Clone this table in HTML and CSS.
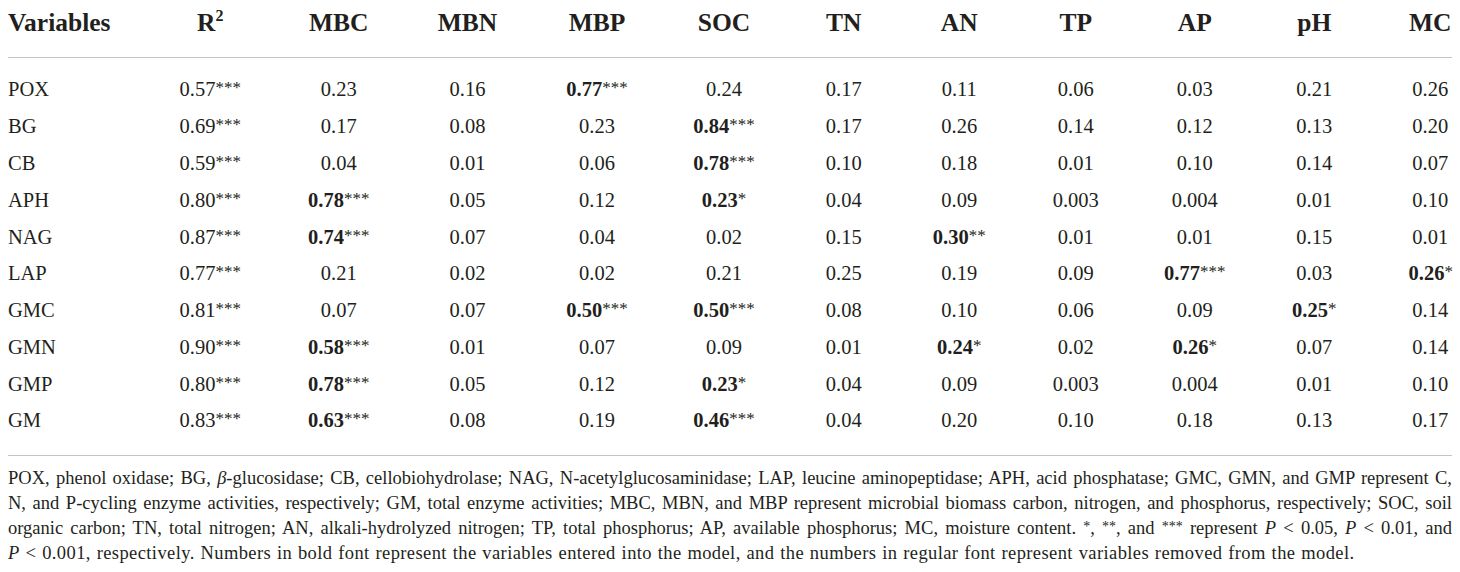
FILE: index.html
```html
<!DOCTYPE html>
<html>
<head>
<meta charset="utf-8">
<link rel="stylesheet" href="styles.css">
</head>
<body>
<div class="wrap">
<table class="tbl">
  <colgroup>
    <col class="c1"><col class="c2"><col class="c3"><col class="c4"><col class="c5"><col class="c6">
    <col class="c7"><col class="c8"><col class="c9"><col class="c10"><col class="c11"><col class="c12">
  </colgroup>
  <thead>
    <tr>
      <th class="first">Variables</th><th>R<sup class="sq">2</sup></th><th>MBC</th><th>MBN</th><th>MBP</th><th>SOC</th><th>TN</th><th>AN</th><th>TP</th><th>AP</th><th>pH</th><th class="last">MC</th>
    </tr>
  </thead>
  <tbody>
    <tr class="top"><td class="first">POX</td><td>0.57<span class="st">***</span></td><td>0.23</td><td>0.16</td><td><b>0.77</b><span class="st">***</span></td><td>0.24</td><td>0.17</td><td>0.11</td><td>0.06</td><td>0.03</td><td>0.21</td><td class="last">0.26</td></tr>
    <tr><td class="first">BG</td><td>0.69<span class="st">***</span></td><td>0.17</td><td>0.08</td><td>0.23</td><td><b>0.84</b><span class="st">***</span></td><td>0.17</td><td>0.26</td><td>0.14</td><td>0.12</td><td>0.13</td><td class="last">0.20</td></tr>
    <tr><td class="first">CB</td><td>0.59<span class="st">***</span></td><td>0.04</td><td>0.01</td><td>0.06</td><td><b>0.78</b><span class="st">***</span></td><td>0.10</td><td>0.18</td><td>0.01</td><td>0.10</td><td>0.14</td><td class="last">0.07</td></tr>
    <tr><td class="first">APH</td><td>0.80<span class="st">***</span></td><td><b>0.78</b><span class="st">***</span></td><td>0.05</td><td>0.12</td><td><b>0.23</b><span class="st">*</span></td><td>0.04</td><td>0.09</td><td>0.003</td><td>0.004</td><td>0.01</td><td class="last">0.10</td></tr>
    <tr><td class="first">NAG</td><td>0.87<span class="st">***</span></td><td><b>0.74</b><span class="st">***</span></td><td>0.07</td><td>0.04</td><td>0.02</td><td>0.15</td><td><b>0.30</b><span class="st">**</span></td><td>0.01</td><td>0.01</td><td>0.15</td><td class="last">0.01</td></tr>
    <tr><td class="first">LAP</td><td>0.77<span class="st">***</span></td><td>0.21</td><td>0.02</td><td>0.02</td><td>0.21</td><td>0.25</td><td>0.19</td><td>0.09</td><td><b>0.77</b><span class="st">***</span></td><td>0.03</td><td class="last"><b>0.26</b><span class="st">*</span></td></tr>
    <tr><td class="first">GMC</td><td>0.81<span class="st">***</span></td><td>0.07</td><td>0.07</td><td><b>0.50</b><span class="st">***</span></td><td><b>0.50</b><span class="st">***</span></td><td>0.08</td><td>0.10</td><td>0.06</td><td>0.09</td><td><b>0.25</b><span class="st">*</span></td><td class="last">0.14</td></tr>
    <tr><td class="first">GMN</td><td>0.90<span class="st">***</span></td><td><b>0.58</b><span class="st">***</span></td><td>0.01</td><td>0.07</td><td>0.09</td><td>0.01</td><td><b>0.24</b><span class="st">*</span></td><td>0.02</td><td><b>0.26</b><span class="st">*</span></td><td>0.07</td><td class="last">0.14</td></tr>
    <tr><td class="first">GMP</td><td>0.80<span class="st">***</span></td><td><b>0.78</b><span class="st">***</span></td><td>0.05</td><td>0.12</td><td><b>0.23</b><span class="st">*</span></td><td>0.04</td><td>0.09</td><td>0.003</td><td>0.004</td><td>0.01</td><td class="last">0.10</td></tr>
    <tr class="bottom"><td class="first">GM</td><td>0.83<span class="st">***</span></td><td><b>0.63</b><span class="st">***</span></td><td>0.08</td><td>0.19</td><td><b>0.46</b><span class="st">***</span></td><td>0.04</td><td>0.20</td><td>0.10</td><td>0.18</td><td>0.13</td><td class="last">0.17</td></tr>
  </tbody>
</table>
<div class="notes">
  <span class="ln just">POX, phenol oxidase; BG, <i>β</i>-glucosidase; CB, cellobiohydrolase; NAG, N-acetylglucosaminidase; LAP, leucine aminopeptidase; APH, acid phosphatase; GMC, GMN, and GMP represent C,</span>
  <span class="ln just">N, and P-cycling enzyme activities, respectively; GM, total enzyme activities; MBC, MBN, and MBP represent microbial biomass carbon, nitrogen, and phosphorus, respectively; SOC, soil</span>
  <span class="ln just">organic carbon; TN, total nitrogen; AN, alkali-hydrolyzed nitrogen; TP, total phosphorus; AP, available phosphorus; MC, moisture content. <span class="fs">*</span>, <span class="fs">**</span>, and <span class="fs">***</span> represent <i>P</i> &lt; 0.05, <i>P</i> &lt; 0.01, and</span>
  <span class="ln last-line"><i>P</i> &lt; 0.001, respectively. Numbers in bold font represent the variables entered into the model, and the numbers in regular font represent variables removed from the model.</span>
</div>
</div>
</body>
</html>
```

FILE: styles.css
```css
html, body {
  margin: 0;
  padding: 0;
  background: #ffffff;
}
body {
  font-family: "Liberation Serif", "Times New Roman", serif;
  color: #231f20;
}
.wrap {
  width: 1444px;
  padding: 0 8px;
}
.tbl {
  width: 1444px;
  border-collapse: collapse;
  table-layout: fixed;
}
.c1 { width: 138px; }
.c2 { width: 128.5px; }
.c3 { width: 128.5px; }
.c4 { width: 129px; }
.c5 { width: 130px; }
.c6 { width: 124px; }
.c7 { width: 115.5px; }
.c8 { width: 115.5px; }
.c9 { width: 117.5px; }
.c10 { width: 120.5px; }
.c11 { width: 118.5px; }
.c12 { width: 78.5px; }
.tbl th {
  font-size: 25.5px;
  font-weight: bold;
  line-height: 28px;
  padding: 9px 0 20px 0;
  text-align: center;
  white-space: nowrap;
  border-bottom: 1px solid #c4c4c4;
}
.tbl td {
  font-size: 20.5px;
  line-height: 24px;
  height: 24px;
  padding: 6.4px 0;
  text-align: center;
  white-space: nowrap;
}
.tbl .first { text-align: left; }
.tbl .last { padding-left: 35px; }
.tbl tr.top td { padding-top: 19.4px; }
.tbl tr.bottom td {
  padding-bottom: 22.4px;
  border-bottom: 1px solid #c4c4c4;
}
.tbl b { font-weight: bold; }
.sq {
  font-size: 16px;
  line-height: 0;
  vertical-align: 10px;
}
.st {
  font-size: 17px;
  line-height: 0;
  vertical-align: 3px;
}
.notes {
  padding-top: 10px;
  font-size: 18.5px;
  line-height: 25px;
}
.ln { display: block; white-space: nowrap; }
.ln.just {
  white-space: normal;
  text-align: justify;
  text-align-last: justify;
}
.ln.last-line {
  letter-spacing: 0.4px;
  word-spacing: 0.8px;
}
.fs { font-size: 14px; line-height: 0; vertical-align: 3px; }
```
